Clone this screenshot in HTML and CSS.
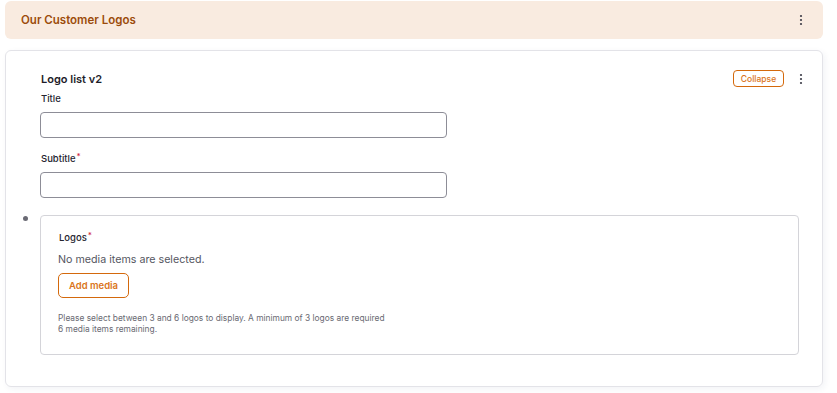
FILE: index.html
```html
<html>
<head>
<meta name="viewport" content="width=device-width, initial-scale=1.0">
<title>Our Customer Logos</title>
<link rel="stylesheet" href="styles.css">
</head>
<body>
	<div class="section-bar">
		<h1>Our Customer Logos</h1>
		<button class="kebab" type="button" aria-label="More">
			<svg width="4" height="12" viewBox="0 0 4 12"><circle cx="2" cy="2" r="1.1"/><circle cx="2" cy="6" r="1.1"/><circle cx="2" cy="10" r="1.1"/></svg>
		</button>
	</div>

	<div class="card">
		<div class="card-head">
			<h2>Logo list v2</h2>
			<button class="btn btn-small" type="button">Collapse</button>
			<button class="kebab" type="button" aria-label="More">
				<svg width="4" height="12" viewBox="0 0 4 12"><circle cx="2" cy="2" r="1.1"/><circle cx="2" cy="6" r="1.1"/><circle cx="2" cy="10" r="1.1"/></svg>
			</button>
		</div>

		<div class="field">
			<label for="title">Title</label>
			<input type="text" id="title" />
		</div>
		<div class="field">
			<label for="subtitle">Subtitle<span class="req">*</span></label>
			<input type="text" id="subtitle" />
		</div>

		<ul class="items">
			<li class="media-box">
				<div class="box-label">Logos<span class="req">*</span></div>
				<p class="empty">No media items are selected.</p>
				<button class="btn" type="button">Add media</button>
				<p class="help">Please select between 3 and 6 logos to display. A minimum of 3 logos are required<br>6 media items remaining.</p>
			</li>
		</ul>
	</div>
</body>
</html>
```

FILE: styles.css
```css
*{
	box-sizing: border-box;
	margin: 0px;
	padding: 0px;
}

body{
	background: #ffffff;
	font-family: Inter, 'Noto Sans', sans-serif;
	color: #1f1f2b;
	padding: 1px 14px 0 5px;
}

button{
	font-family: inherit;
	background: none;
	border: 0;
	cursor: pointer;
}

.section-bar{
	display: flex;
	align-items: center;
	height: 38px;
	padding: 0 14px 0 16px;
	background: #f9ebe0;
	border-radius: 6px;
}

.section-bar h1{
	flex: 1;
	font-size: 11.5px;
	font-weight: 600;
	color: #9c4b0b;
}

.kebab{
	display: flex;
	align-items: center;
	justify-content: center;
	width: 16px;
	height: 17px;
	fill: #3d3d48;
}

.card{
	margin-top: 11px;
	padding: 19px 13px 31px 34px;
	border: 1px solid #e3e3e8;
	border-radius: 6px;
	box-shadow: 2px 2px 6px rgba(40, 50, 110, 0.06);
}

.card-head{
	display: flex;
	align-items: center;
	height: 17px;
	margin-bottom: 6px;
}

.card-head h2{
	flex: 1;
	font-size: 11px;
	font-weight: 600;
	color: #1d1d29;
	padding-left: 1px;
}

.card-head .kebab{
	margin-left: 9px;
}

.btn{
	display: inline-flex;
	align-items: center;
	justify-content: center;
	height: 25px;
	width: 71px;
	border: 1px solid #d4690c;
	border-radius: 5px;
	color: #da7420;
	font-size: 9.5px;
	font-weight: 600;
	background: #ffffff;
}

.btn-small{
	height: 17px;
	width: 51px;
	font-size: 8.5px;
	font-weight: 500;
	border-radius: 4px;
}

.field{
	width: 407px;
	margin-bottom: 15px;
}

.field label,
.box-label{
	display: block;
	font-size: 9.5px;
	line-height: 12px;
	font-weight: 500;
	color: #25252f;
	padding-left: 1px;
	margin-bottom: 7px;
}

.req{
	color: #d0253a;
	font-size: 8px;
	line-height: 0;
	vertical-align: 3px;
	margin-left: 1px;
}

.field input{
	display: block;
	width: 100%;
	height: 26px;
	border: 1px solid #8d8d97;
	border-radius: 4px;
	background: #ffffff;
}

.items{
	list-style: none;
	margin-top: 17px;
	margin-right: 10px;
}

.media-box{
	position: relative;
	padding: 16px 16px 19px 17px;
	border: 1px solid #d4d4d9;
	border-radius: 4px;
}

/* item marker sits out in the card's left gutter */
.media-box::before{
	content: "";
	position: absolute;
	left: -18px;
	top: 0px;
	width: 5px;
	height: 5px;
	border-radius: 50%;
	background: #6a6a74;
}

.box-label{
	margin-bottom: 8px;
}

.empty{
	font-size: 10.7px;
	line-height: 16px;
	color: #55565f;
	margin-bottom: 5px;
}

.help{
	margin-top: 15px;
	font-size: 8.4px;
	line-height: 11px;
	color: #6a6a73;
}
```
